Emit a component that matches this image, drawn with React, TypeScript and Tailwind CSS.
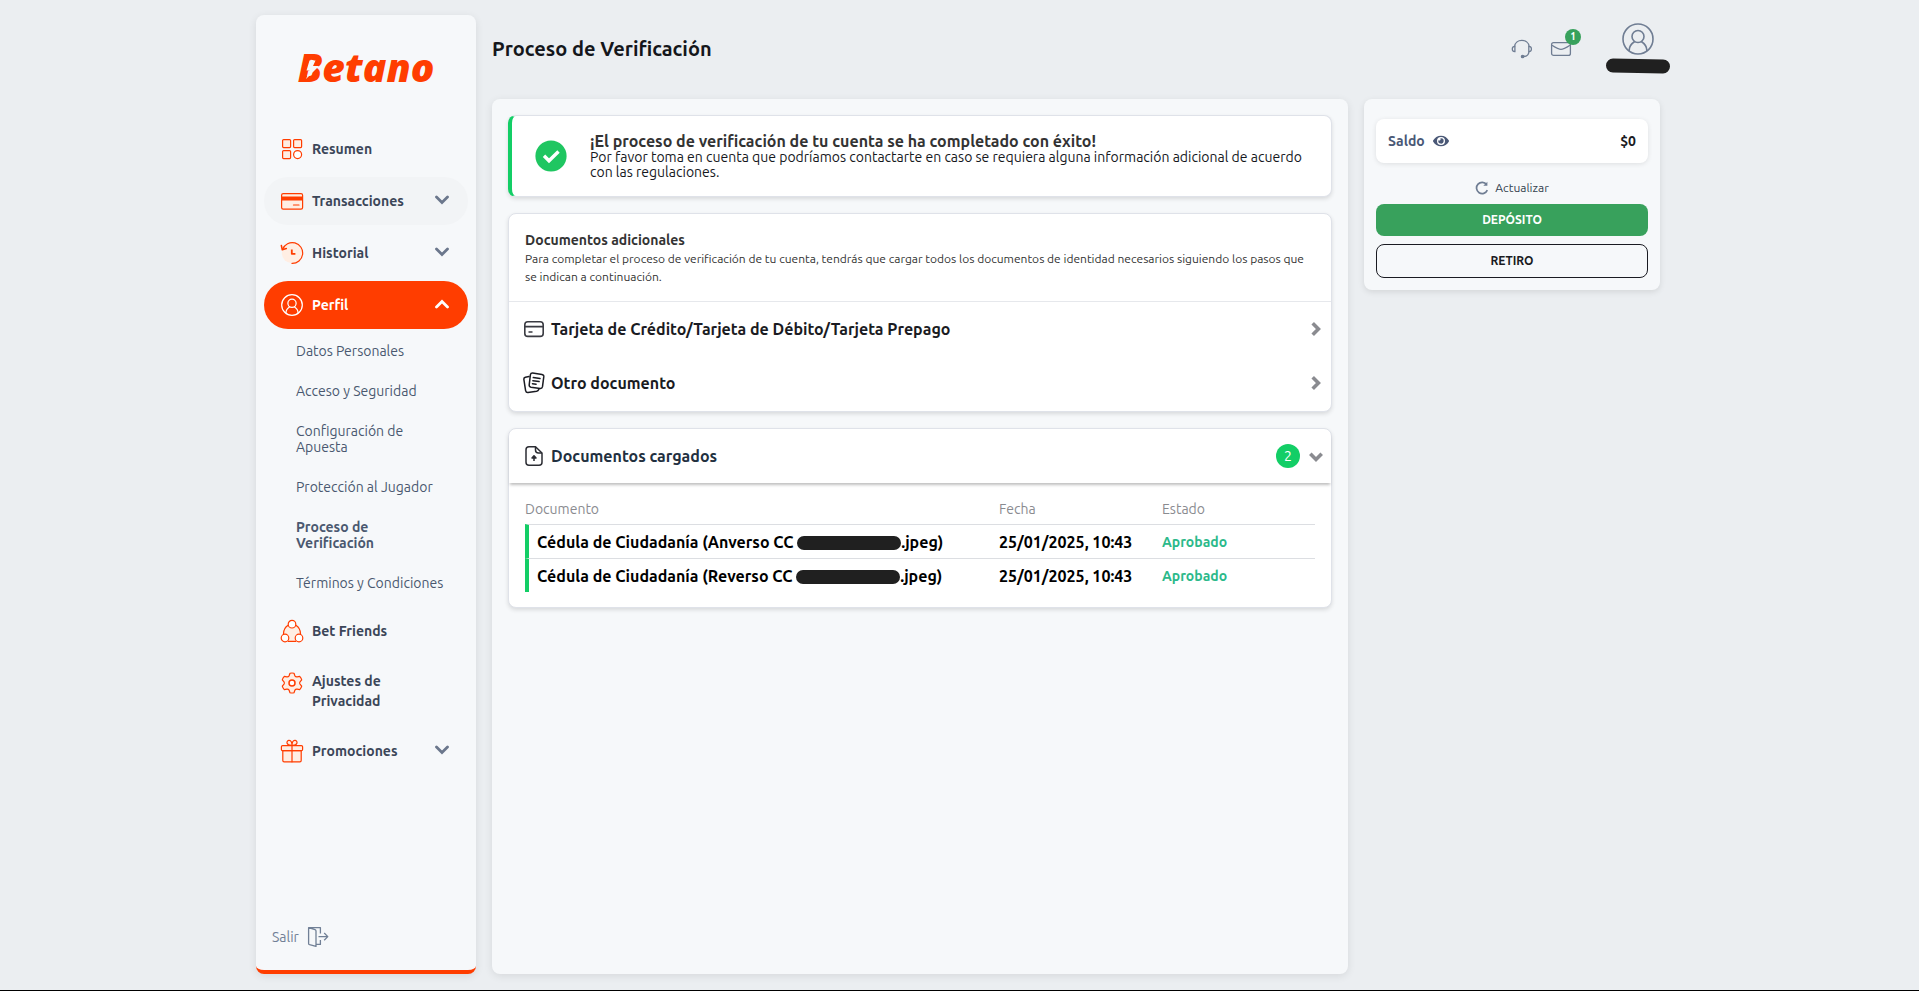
import type { ReactNode } from 'react'
import { clsx } from 'clsx'
import { FaEye } from 'react-icons/fa'

function OrangeIcon({ children }: { children: ReactNode }) {
  return (
    <svg
      viewBox="0 0 24 24"
      className="size-6 shrink-0 self-start"
      fill="#ffeee3"
      stroke="#ff3d00"
      strokeWidth="1.2"
      strokeLinecap="round"
      strokeLinejoin="round"
      aria-hidden="true"
    >
      {children}
    </svg>
  )
}

function GridIcon() {
  return (
    <OrangeIcon>
      <rect x="2.6" y="2.6" width="8" height="8" rx="1" />
      <rect x="13.6" y="2.6" width="8" height="8" rx="1" />
      <rect x="2.6" y="13.6" width="8" height="8" rx="1" />
      <circle cx="17.6" cy="17.6" r="4" fill="#fff" />
    </OrangeIcon>
  )
}

function CardIcon() {
  return (
    <OrangeIcon>
      <rect x="1.6" y="4.6" width="21" height="15.6" rx="1.6" />
      <path d="M1.6 8h20.8v3H1.6z" fill="#ff3d00" />
      <path d="M13.5 16h5.5" />
    </OrangeIcon>
  )
}

function HistoryIcon() {
  return (
    <OrangeIcon>
      <circle cx="12" cy="12" r="10.2" stroke="none" />
      <path d="M2.6 8.2A10.4 10.4 0 1 1 12 22.4" fill="none" />
      <path d="M1.4 4.6l.9 4.2 4-1.2" fill="none" strokeWidth="1.6" />
      <path d="M11.8 8.6v4.2h3.6" fill="none" strokeWidth="1.8" strokeLinecap="butt" />
    </OrangeIcon>
  )
}

function UserCircle({ className }: { className: string }) {
  return (
    <svg viewBox="0 0 32 32" className={className} fill="none" stroke="currentColor" aria-hidden="true">
      <circle cx="16" cy="16" r="15" />
      <circle cx="16" cy="13.5" r="6" />
      <path d="M7.2 28v-.8c0-4.6 3.2-7.2 5.5-8.7M24.8 28v-.8c0-4.6-3.2-7.2-5.5-8.7" />
    </svg>
  )
}

function FriendsIcon() {
  return (
    <OrangeIcon>
      <path d="M7.6 5.8C4.8 8 3.4 11 3.4 15.5l4.1 6.7h9l4.1-6.7c0-4.5-1.4-7.5-4.2-9.7z" stroke="none" />
      <path d="M8.2 6.2C5 8 3.6 11 3.5 14.7M15.8 6.2c3.2 1.8 4.6 4.8 4.7 8.5M8.3 22.4h7.4" fill="none" />
      <circle cx="12" cy="5.2" r="3.8" fill="#fff" />
      <circle cx="5" cy="19" r="3.8" fill="#fff" />
      <circle cx="19" cy="19" r="3.8" fill="#fff" />
    </OrangeIcon>
  )
}

function GearIcon() {
  return (
    <OrangeIcon>
      <path d="M10 2.3q2-.6 4 0l.9 2.500q.8 1.200 2.200 1l2.600-.4q1.500 1.500 2 3.500l-1.700 2q-.8 1.100 0 2.200l1.700 2q-.5 2-2 3.500l-2.600-.4q-1.400-.2-2.200 1l-.9 2.500q-2 .6-4 0l-.9-2.500q-.8-1.200-2.200-1l-2.600.4q-1.500-1.500-2-3.500l1.700-2q.8-1.100 0-2.200l-1.700-2q.5-2 2-3.500l2.600.4q1.400.2 2.200-1z" />
      <circle cx="12" cy="12" r="3" fill="#fff" strokeWidth="1.5" />
    </OrangeIcon>
  )
}

function GiftIcon() {
  return (
    <OrangeIcon>
      <path d="M2.8 11.6h18.4v10a1.3 1.3 0 0 1-1.3 1.3H4.1a1.3 1.3 0 0 1-1.3-1.3z" />
      <rect x="1.4" y="6.6" width="21.2" height="5" rx="1.2" />
      <path d="M12 6.4v16.4M12 6.4C6 6.8 6 2 8.7 1.4c2.500-.5 3.300 2.300 3.300 5zM12 6.400c6 .4 6-4.400 3.300-5C12.800.9 12 3.700 12 6.400z" />
    </OrangeIcon>
  )
}

function Chevron({ className, wide }: { className?: string; wide?: boolean }) {
  return (
    <svg viewBox="0 0 14 10" className={clsx('h-[10px] w-[14px] shrink-0', className)} fill="none" aria-hidden="true">
      <path
        d={wide ? 'M1.3 1.7L7 7.4l5.7-5.7' : 'M1.5 2L7 7.5 12.5 2'}
        stroke="currentColor"
        strokeWidth={wide ? 3.6 : 2.8}
        strokeLinecap={wide ? 'butt' : 'round'}
      />
    </svg>
  )
}

function Redaction({ className }: { className?: string }) {
  return <span className={clsx('inline-block h-[14px] rounded-full bg-[#202020]', className)} aria-hidden="true" />
}

const cardClass = 'rounded-lg border border-[#dfe2e9] bg-white shadow-[0_2px_4px_rgba(0,0,0,0.12)]'

const navTop = [
  { label: 'Resumen', icon: <GridIcon /> },
  { label: 'Transacciones', icon: <CardIcon />, expandable: true, hovered: true },
  { label: 'Historial', icon: <HistoryIcon />, expandable: true },
]

const navBottom = [
  { label: 'Bet Friends', icon: <FriendsIcon /> },
  { label: 'Ajustes de Privacidad', icon: <GearIcon /> },
  { label: 'Promociones', icon: <GiftIcon />, expandable: true },
]

const profileLinks = [
  'Datos Personales',
  'Acceso y Seguridad',
  'Configuración de Apuesta',
  'Protección al Jugador',
  'Proceso de Verificación',
  'Términos y Condiciones',
]

const uploads = [
  { side: 'Anverso', date: '25/01/2025, 10:43', status: 'Aprobado' },
  { side: 'Reverso', date: '25/01/2025, 10:43', status: 'Aprobado' },
]

type NavItemProps = { label: string; icon: ReactNode; expandable?: boolean; hovered?: boolean; open?: boolean }

function NavItem({ label, icon, expandable, hovered, open }: NavItemProps) {
  const className = clsx(
    'flex min-h-12 w-full items-center gap-2 rounded-3xl py-3 pr-[19px] pl-4 text-left text-[14px] leading-5 font-bold',
    open ? 'bg-[#ff3d00] text-white' : 'text-[#3b4658]',
    hovered && 'bg-[#f2f4f6]',
  )
  const content = (
    <>
      {icon}
      <span className="max-w-24 flex-1">{label}</span>
      {expandable && (
        <Chevron className={clsx('mt-[6px] ml-auto self-start', open ? 'rotate-180' : 'text-[#6b778c]')} />
      )}
    </>
  )

  return expandable ? (
    <button type="button" aria-expanded={!!open} className={className}>
      {content}
    </button>
  ) : (
    <a href="#" className={className}>
      {content}
    </a>
  )
}

function Logo() {
  return (
    <a
      href="#"
      className="relative mx-auto flex w-[136px] justify-center font-['Open_Sans',sans-serif] text-[39px] leading-[40px] font-extrabold text-[#ff3d00] italic"
    >
      Betano
      <svg viewBox="0 0 32 30" className="absolute top-[6px] left-0 h-[30px] w-8" fill="#f6f8fa" aria-hidden="true">
        <path d="M11.500 7.500h6l-2.500 5.500h6L8 26l3.500-8.500H8.500z" />
      </svg>
    </a>
  )
}

function Sidebar() {
  return (
    <aside className="flex w-[220px] shrink-0 flex-col rounded-lg border-b-4 border-[#ff3d00] bg-[#f6f8fa] px-2 pt-8 pb-[22px] shadow-[0_2px_8px_rgba(0,0,0,0.09)]">
      <Logo />
      <nav className="mt-[38px] flex flex-col gap-1">
        {navTop.map((item) => (
          <NavItem key={item.label} {...item} />
        ))}
        <NavItem label="Perfil" icon={<UserCircle className="size-6 p-px stroke-[1.8]" />} expandable open />
        <ul className="-mt-[2px] pr-3 pl-8 text-[14px] leading-4 text-[#4a5870]">
          {profileLinks.map((label) => (
            <li key={label}>
              <a
                href="#"
                className={clsx('block py-3', label === 'Proceso de Verificación' && 'pr-10 font-bold')}
              >
                {label}
              </a>
            </li>
          ))}
        </ul>
        {navBottom.map((item) => (
          <NavItem key={item.label} {...item} />
        ))}
      </nav>
      <button type="button" className="mt-auto ml-2 flex items-center gap-2 self-start text-[14px] leading-5 text-[#718096]">
        Salir
        <svg viewBox="0 0 22 22" className="size-[22px]" fill="none" stroke="currentColor" strokeWidth="1.3" strokeLinejoin="round" aria-hidden="true">
          <path d="M1.6 1.6l6.4 2q1 .3 1 1.3v15.5l-6.4-1.7q-1-.3-1-1.300zM1.600 1.600h11.800v6M13.400 14v4.400H9M11.500 10.600h9M17.200 7l3.600 3.600-3.600 3.600" />
        </svg>
      </button>
    </aside>
  )
}

function SuccessBanner() {
  return (
    <section className={clsx(cardClass, 'flex items-center border-l-4 border-l-[#13ce66] px-[23px] py-4')}>
      <svg viewBox="0 0 32 32" className="size-8 shrink-0" aria-hidden="true">
        <circle cx="16" cy="16" r="15.6" fill="#1fc661" />
        <path d="M9 15.8l5 5 9.500-9.300" fill="none" stroke="#fff" strokeWidth="3.4" />
      </svg>
      <div className="ml-[23px] flex-1">
        <h2 className="text-[16px] leading-[18px] font-bold text-[#333]">
          ¡El proceso de verificación de tu cuenta se ha completado con éxito!
        </h2>
        <p className="text-[14px] leading-[15px] text-[#16181d]">
          Por favor toma en cuenta que podríamos contactarte en caso se requiera alguna información adicional de
          acuerdo con las regulaciones.
        </p>
      </div>
    </section>
  )
}

function DocumentRow({ label, icon }: { label: string; icon: ReactNode }) {
  return (
    <button type="button" className="flex h-[54px] w-full items-center gap-[6px] pr-2 pl-[14px] text-left text-[16px] leading-5 font-bold text-[#1a1b22]">
      {icon}
      {label}
      <Chevron wide className="ml-auto -rotate-90 text-[#8a8b90]" />
    </button>
  )
}

function AdditionalDocuments() {
  return (
    <section className={clsx(cardClass, 'pb-px')}>
      <div className="border-b border-[#e6e8ec] px-4 pt-4 pb-[15px] text-[#333]">
        <h2 className="text-[14px] leading-5 font-bold">Documentos adicionales</h2>
        <p className="text-[12px] leading-[18px]">
          Para completar el proceso de verificación de tu cuenta, tendrás que cargar todos los documentos de identidad
          necesarios siguiendo los pasos que se indican a continuación.
        </p>
      </div>
      <DocumentRow
        label="Tarjeta de Crédito/Tarjeta de Débito/Tarjeta Prepago"
        icon={
          <svg viewBox="0 0 22 22" className="size-[22px]" fill="none" stroke="#3a3b42" strokeWidth="1.6" aria-hidden="true">
            <rect x="1.8" y="3.8" width="18.4" height="14.6" rx="3" />
            <path d="M2 8.6h18M5.5 14h4" />
          </svg>
        }
      />
      <DocumentRow
        label="Otro documento"
        icon={
          <svg viewBox="0 0 22 22" className="size-[22px]" fill="none" stroke="#1a1b22" strokeWidth="1.5" strokeLinecap="round" aria-hidden="true">
            <path d="M9.6 1l9.4 1.4q2 .4 1.8 2.3l-1.3 10q-.4 2-2.300 1.800L8 15.200q-2-.4-1.800-2.300L7.400 2.700Q7.800.9 9.600 1z" />
            <path d="M6 4.600l-3.600.6Q.6 5.600.9 7.600l1.700 11q.5 2.200 2.400 2l8.600-1.300q1.600-.3 2.300-2M10.300 5.600l6.700 1M9.900 8.700l6.200.9M9.500 11.700l3.600.5" />
          </svg>
        }
      />
    </section>
  )
}

function UploadedDocuments() {
  return (
    <section className={cardClass}>
      <button type="button" className="flex h-[54px] w-full items-center rounded-t-lg pr-2 pl-[14px] text-left shadow-[0_3px_3px_-1px_rgba(0,0,0,0.25)]">
        <svg viewBox="0 0 22 22" className="size-[22px]" fill="none" stroke="#2b2c33" strokeWidth="1.5" strokeLinejoin="round" aria-hidden="true">
          <path d="M12.5 1.8H6q-3 0-3 3v12.4q0 3 3 3h10q3 0 3-3V8z" />
          <path d="M12.5 1.8V5q0 3 3 3H19M11 16v-4.5" />
          <path d="M9 13l2-2.2 2 2.2z" fill="#2b2c33" />
        </svg>
        <span className="ml-[6px] text-[16px] leading-5 font-bold text-[#22303f]">Documentos cargados</span>
        <span className="ml-auto flex size-6 items-center justify-center rounded-full bg-[#13ce66] text-[14px] leading-none text-white">
          2
        </span>
        <Chevron wide className="mt-px ml-[9px] text-[#8a8b90]" />
      </button>
      <div className="px-4 pt-[17px] pb-[15px]">
        <table className="w-full table-fixed border-separate border-spacing-0 text-left">
          <thead className="text-[14px] leading-[18px] text-[#8a8b90]">
            <tr>
              <th className="w-[60%] pb-[6px] font-normal">Documento</th>
              <th className="w-[163px] pb-[6px] font-normal">Fecha</th>
              <th className="pb-[6px] font-normal">Estado</th>
            </tr>
          </thead>
          <tbody className="text-[16px] leading-5 font-bold text-black">
            {uploads.map((doc) => (
              <tr key={doc.side}>
                <td className="h-[34px] border-t border-l-4 border-t-[#dcdee2] border-l-[#13ce66] pl-2 whitespace-nowrap">
                  Cédula de Ciudadanía ({doc.side} CC <Redaction className="w-[104px] align-middle" />
                  .jpeg)
                </td>
                <td className="border-t border-[#dcdee2] whitespace-nowrap">{doc.date}</td>
                <td className="border-t border-[#dcdee2] text-[14px] text-[#2bb98a]">{doc.status}</td>
              </tr>
            ))}
          </tbody>
        </table>
      </div>
    </section>
  )
}

function AccountBar() {
  return (
    <div className="flex items-start justify-end text-[#6f7d93]">
      <a href="#" aria-label="Soporte" className="mt-[38px]">
        <svg viewBox="0 0 22 22" className="size-[22px]" fill="none" stroke="currentColor" strokeWidth="1.3" aria-hidden="true">
          <path d="M3.6 8.5C4 4.6 7.2 2.4 10.8 2.4s7 2.200 7.300 6.100M18 13.500c-.3 3.400-2.300 5-5.500 5" />
          <path d="M3.900 8.400c-1.600-.2-2.600.9-2.600 2.600s1 2.800 2.600 2.600zM17.800 8.400c1.600-.2 2.600.9 2.600 2.600s-1 2.800-2.600 2.600z" />
          <circle cx="11.6" cy="18.5" r="1.2" fill="currentColor" />
        </svg>
      </a>
      <a href="#" aria-label="Mensajes" className="relative mt-[38px] ml-[17px]">
        <svg viewBox="0 0 22 22" className="size-[22px]" fill="none" stroke="currentColor" strokeWidth="1.3" aria-hidden="true">
          <rect x="1.6" y="4.6" width="18.8" height="12.8" rx="2" />
          <path d="M2 7.2q6.6 4.2 9 4.2t9-4.2" />
        </svg>
        <span className="absolute -top-[9px] left-[15px] flex size-4 items-center justify-center rounded-full bg-[#38a15c] text-[10px] leading-none font-bold text-white">
          1
        </span>
      </a>
      <button type="button" aria-label="Mi cuenta" className="mt-[23px] -mr-[10px] ml-[34px] flex flex-col items-center gap-1">
        <UserCircle className="size-8 stroke-[1.6]" />
        <Redaction className="w-[64px] rotate-1" />
      </button>
    </div>
  )
}

function BalancePanel() {
  return (
    <section className="rounded-lg bg-[#f6f8fa] px-3 pt-5 pb-3 shadow-[0_2px_6px_rgba(0,0,0,0.1)]">
      <div className="flex h-11 items-center rounded-lg bg-white px-3 text-[14px] leading-5 font-bold text-[#4a5876] shadow-[0_1px_5px_rgba(0,0,0,0.1)]">
        Saldo
        <FaEye className="ml-2 size-4" />
        <span className="ml-auto text-[#1a1b22]">$0</span>
      </div>
      <button type="button" className="mx-auto mt-4 flex items-center gap-[6px] text-[12px] leading-[18px] text-[#333f4e]">
        <svg viewBox="0 0 14 14" className="size-[14px]" fill="none" stroke="#6f7d93" strokeWidth="1.7" aria-hidden="true">
          <path d="M12.3 9.2A5.6 5.6 0 1 1 11.6 3.6" />
          <path d="M12.4.8v4H8.3z" fill="#6f7d93" stroke="none" />
        </svg>
        Actualizar
      </button>
      <button type="button" className="mt-[7px] h-8 w-full rounded-lg bg-[#38a15c] text-[12px] font-bold text-white">
        DEPÓSITO
      </button>
      <button type="button" className="mt-2 h-[34px] w-full rounded-lg border border-[#1a1b22] text-[12px] font-bold text-[#1a1b22]">
        RETIRO
      </button>
    </section>
  )
}

export default function App() {
  return (
    <div className="flex min-h-screen justify-center border-b border-black bg-[#ebeef1] font-['Ubuntu','Noto_Sans',sans-serif]">
      <div className="flex w-full max-w-[1407px] gap-4 pt-[15px] pr-[3px] pb-4">
        <Sidebar />
        <main className="-mt-[15px] flex min-w-0 flex-1 flex-col">
          <header className="flex h-[99px] items-start pt-9">
            <h1 className="text-[20px] leading-[26px] font-bold text-[#14161b]">Proceso de Verificación</h1>
          </header>
          <div className="flex flex-1 flex-col gap-4 rounded-lg bg-[#f6f8fa] p-4 shadow-[0_2px_8px_rgba(0,0,0,0.09)]">
            <SuccessBanner />
            <AdditionalDocuments />
            <UploadedDocuments />
          </div>
        </main>
        <div className="-mt-[15px] w-[296px] shrink-0">
          <div className="h-[99px]">
            <AccountBar />
          </div>
          <BalancePanel />
        </div>
      </div>
    </div>
  )
}
